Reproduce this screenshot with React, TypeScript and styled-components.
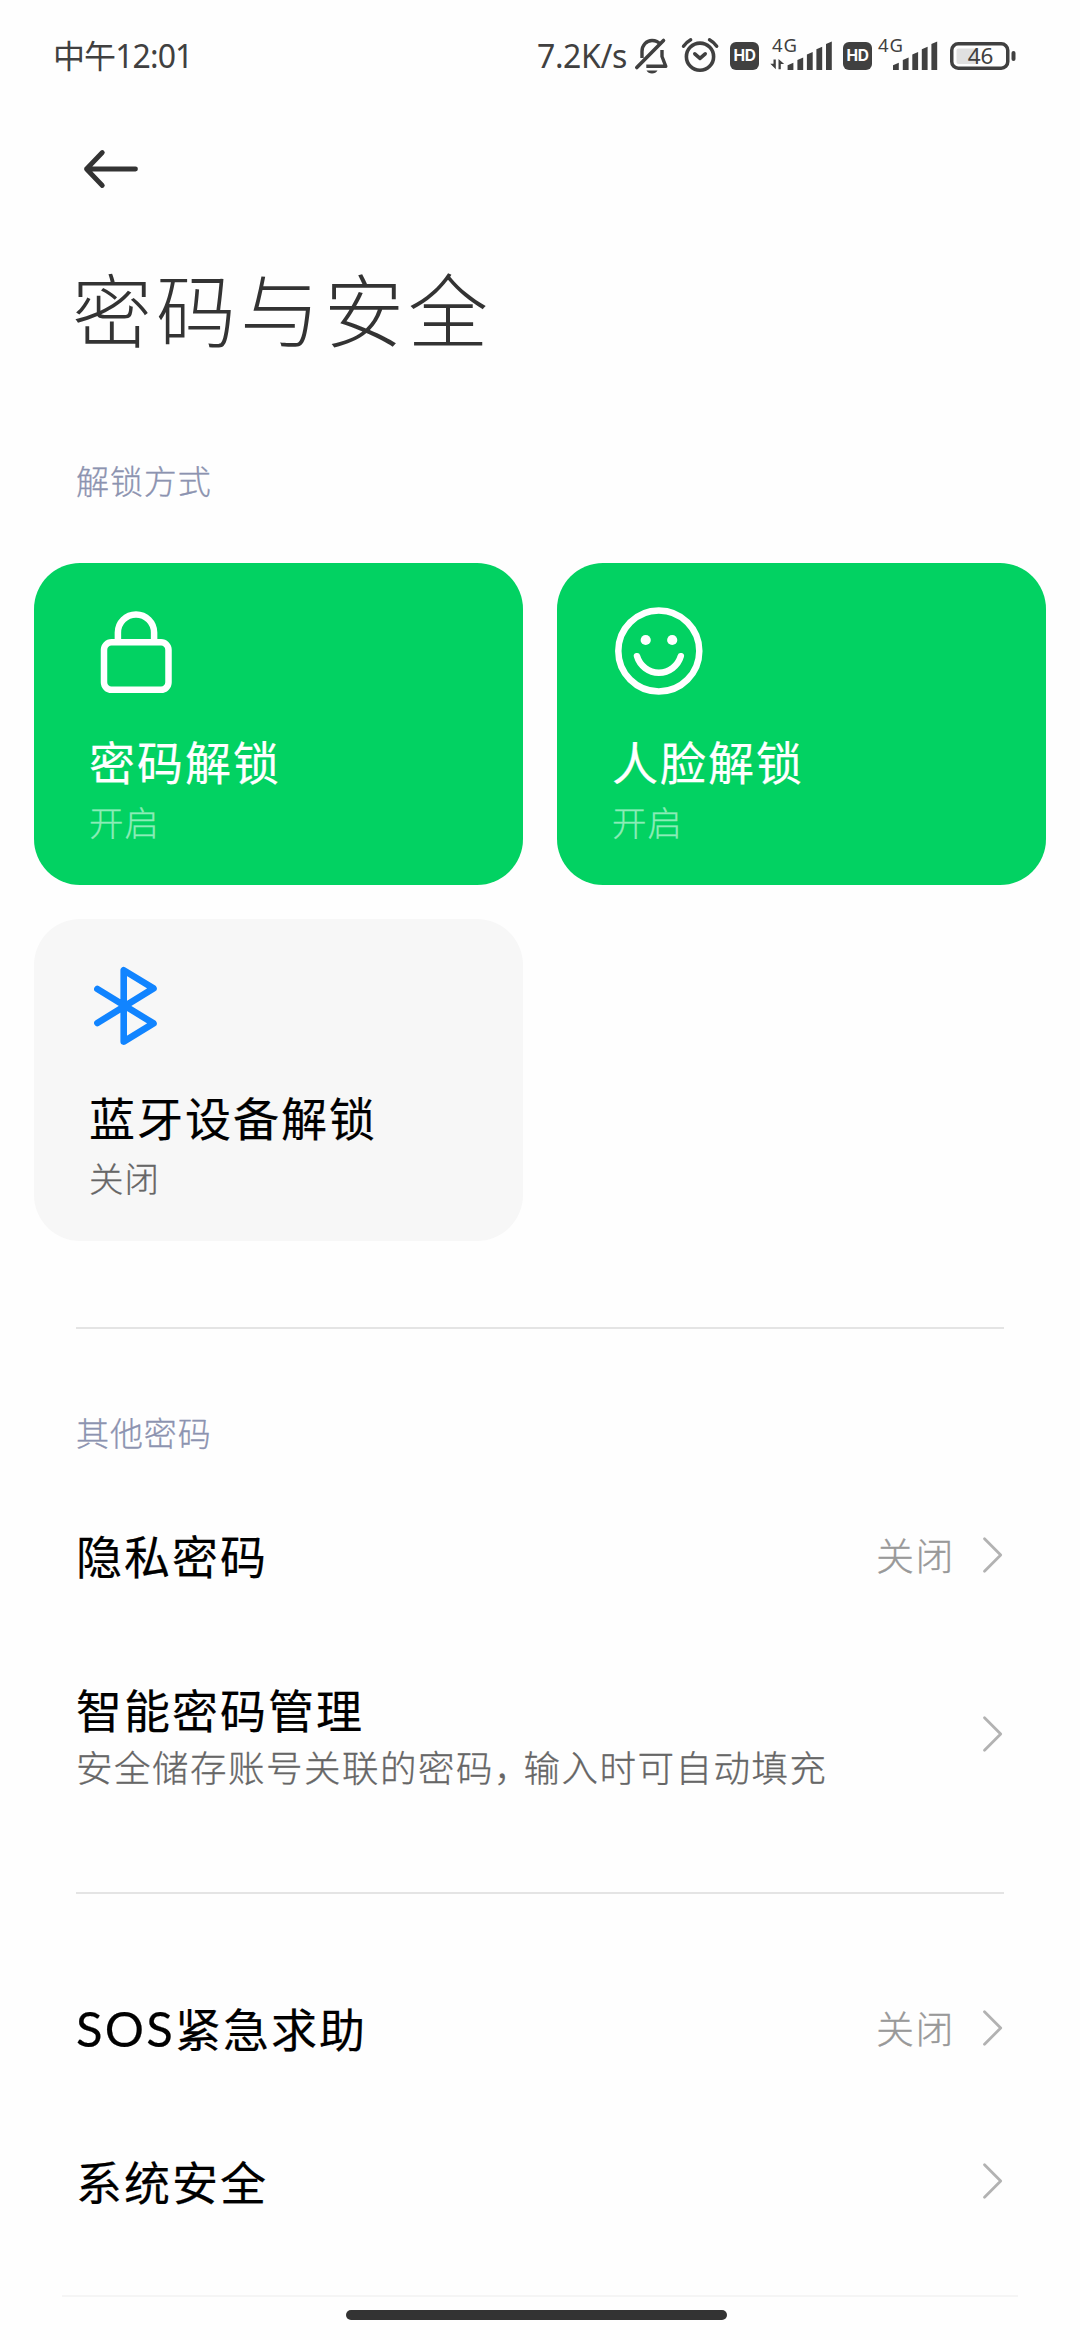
import React from "react";
import styled, { createGlobalStyle } from "styled-components";

const GlobalStyle = createGlobalStyle`
  html, body { margin: 0; padding: 0; background: #fefefe; }
  body { font-family: "Lato", "Noto Sans CJK SC", sans-serif; }
  * { box-sizing: border-box; }
  svg { display: block; flex: none; }
`;

const Screen = styled.div`
  width: 1080px;
  height: 2340px;
  overflow: hidden;
  display: flex;
  flex-direction: column;
  background: #fefefe;
`;

const StatusBar = styled.header`
  display: flex;
  align-items: center;
  height: 112px;
  padding: 0 64px 0 53px;
  color: #404040;
  font-family: "Noto Sans", "Noto Sans CJK SC", sans-serif;
  font-size: 32px;
  line-height: 40px;
`;

const Clock = styled.div`
  flex: 1;
  letter-spacing: -0.9px;
  white-space: nowrap;
`;

const Speed = styled.div`
  width: 97px;
  letter-spacing: -0.4px;
  white-space: nowrap;
`;

const StatusIcons = styled.div`
  display: flex;
  align-items: center;
`;

const HdBadge = styled.div<{ $before: number }>`
  display: flex;
  align-items: center;
  justify-content: center;
  width: 29px;
  height: 28px;
  margin-left: ${(p) => p.$before}px;
  border-radius: 6px;
  background: #404040;
  color: #fefefe;
  font-family: "Inter", sans-serif;
  font-size: 15.5px;
  font-weight: 700;
  line-height: 28px;
  letter-spacing: -0.4px;
`;

const SignalBox = styled.div<{ $before: number; $width: number }>`
  position: relative;
  width: ${(p) => p.$width}px;
  height: 36px;
  margin-left: ${(p) => p.$before}px;
`;

const NetworkLabel = styled.span<{ $left: number }>`
  position: absolute;
  left: ${(p) => p.$left}px;
  top: -3px;
  font-size: 18.5px;
  line-height: 20px;
  letter-spacing: 0.8px;
`;

const BatteryBox = styled.div`
  position: relative;
  display: flex;
  align-items: center;
  margin-left: 13px;
`;

const BatteryText = styled.span`
  position: absolute;
  left: 0;
  top: 0;
  width: 61px;
  text-align: center;
  font-size: 22.5px;
  line-height: 28px;
`;

const Toolbar = styled.nav`
  display: flex;
  align-items: center;
  height: 114px;
  padding-left: 82px;
`;

const PageTitle = styled.h1`
  margin: 34px 0 0 72px;
  font-size: 80px;
  font-weight: 200;
  line-height: 100px;
  letter-spacing: 4px;
  color: #333;
`;

const SectionLabel = styled.h2<{ $before: number }>`
  margin: ${(p) => p.$before}px 0 0 76px;
  font-size: 33px;
  font-weight: 300;
  line-height: 40px;
  letter-spacing: 0.9px;
  color: #8c93b0;
  -webkit-text-stroke: 0.3px #8c93b0;
`;

const CardGrid = styled.section`
  display: grid;
  grid-template-columns: 489px 489px;
  grid-auto-rows: 322px;
  gap: 34px;
  margin: 62px 34px 0;
`;

const Card = styled.div<{ $on: boolean }>`
  display: flex;
  flex-direction: column;
  padding: 40px 0 0 55px;
  border-radius: 46px;
  background: ${(p) => (p.$on ? "#02d262" : "#f7f7f7")};
  color: ${(p) => (p.$on ? "#fff" : "#000")};
`;

const CardTitle = styled.div`
  margin-top: 36px;
  font-size: 46px;
  line-height: 56px;
  letter-spacing: 2px;
  -webkit-text-stroke: 0.2px currentColor;
`;

const CardState = styled.div<{ $on: boolean }>`
  margin-top: 12px;
  font-size: 34.5px;
  font-weight: 300;
  line-height: 40px;
  letter-spacing: 0.9px;
  color: ${(p) => (p.$on ? "#8cecb7" : "#666")};
  -webkit-text-stroke: 0.3px currentColor;
`;

const Divider = styled.hr<{ $before: number }>`
  width: 928px;
  height: 2px;
  margin: ${(p) => p.$before}px 76px 0;
  border: 0;
  flex: none;
  background: #e4e4e4;
`;

const List = styled.section<{ $before: number }>`
  display: flex;
  flex-direction: column;
  margin-top: ${(p) => p.$before}px;
`;

const Row = styled.div<{ $height: number }>`
  display: flex;
  align-items: center;
  height: ${(p) => p.$height}px;
  padding: 0 76px;
`;

const RowText = styled.div<{ $tall: boolean }>`
  flex: 1;
  padding-top: ${(p) => (p.$tall ? 5 : 4)}px;
`;

const RowTitle = styled.div`
  font-size: 46px;
  line-height: 56px;
  letter-spacing: 2px;
  color: #000;
  -webkit-text-stroke: 0.2px #000;
`;

const Latin = styled.span`
  font-size: 49px;
  line-height: 1;
  letter-spacing: 2.2px;
`;

const RowSummary = styled.div`
  margin-top: 7px;
  font-size: 36.5px;
  font-weight: 300;
  line-height: 44px;
  letter-spacing: 1.5px;
  color: #666;
  -webkit-text-stroke: 0.3px #666;
`;

const Tight = styled.span`
  letter-spacing: -7px;
`;

const RowValue = styled.div`
  margin-right: 27px;
  font-size: 38px;
  font-weight: 300;
  line-height: 44px;
  letter-spacing: 1.5px;
  color: #999;
  -webkit-text-stroke: 0.3px #999;
`;

const BottomEdge = styled.div`
  width: 956px;
  height: 2px;
  margin: 38px 62px 0;
  flex: none;
  background: #f5f5f5;
`;

const HomeHandle = styled.div`
  width: 381px;
  height: 10px;
  margin: 13px 0 0 346px;
  flex: none;
  border-radius: 5px;
  background: #333;
`;

const AlarmSvg = styled.svg`
  margin-left: 12px;
`;

const MutedBell = () => (
  <svg width="34" height="38" viewBox="633 37 34 38" fill="none" stroke="#404040">
    <path d="M641 58v-6.500c0-6.500 4.500-11 10-11 3.600 0 6.600 1.500 8.400 4" strokeWidth="3.400" />
    <path d="M661 50v6.500l3.800 9.800h-19.500" strokeWidth="3.400" strokeLinejoin="round" />
    <path d="M635.800 67.500L662.500 40.500" strokeWidth="3.600" strokeLinecap="round" />
    <path d="M645.500 70.500h11c-1 2-3 3-5.500 3s-4.500-1-5.500-3z" fill="#404040" stroke="none" />
  </svg>
);

const Alarm = () => (
  <AlarmSvg width="40" height="38" viewBox="679 37 40 38" fill="none" stroke="#404040" strokeLinecap="round">
    <circle cx="699" cy="56.700" r="13.600" strokeWidth="3.600" />
    <path d="M682.500 46.300c2-2.800 4.300-4.900 7.200-6.500M715.700 46.300c-2-2.800-4.300-4.900-7.200-6.500" strokeWidth="3.400" />
    <path d="M693.800 53.800l5.200 4.600 5.200-4.600" strokeWidth="3.600" strokeLinejoin="round" />
  </AlarmSvg>
);

const bars = [
  [0, 62.7],
  [9.8, 57.4],
  [19.3, 52],
  [28.8, 46.7],
  [38.4, 41.5],
];

const SignalBars = ({ x, arrows }: { x: number; arrows?: boolean }) => (
  <svg width="66" height="36" viewBox="0 38 66 36" fill="#404040">
    {bars.map(([dx, top]) => (
      <path key={dx} d={`M${x + dx} ${top + 2.5}L${x + dx + 5.8} ${top}V70H${x + dx}z`} />
    ))}
    {arrows && <path d="M3.500 59.500h2.300v9.800L.3 63.800h3.200zM8.500 69.300h2.300v-5.300h3.400L8.500 59z" />}
  </svg>
);

const BackArrow = () => (
  <svg width="60" height="44" viewBox="82 147 60 44" fill="none" stroke="#333" strokeWidth="4.800" strokeLinecap="round" strokeLinejoin="round">
    <path d="M135.500 169H86.500M102.300 152.500L86.500 169l15.800 16.500" />
  </svg>
);

const LockIcon = () => (
  <svg width="96" height="96" fill="none" stroke="#fff" strokeWidth="6.500">
    <rect x="15" y="39.300" width="64.500" height="47.500" rx="7.500" />
    <path d="M28.900 39V29.500a18.100 18.100 0 0 1 36.200 0V39" />
  </svg>
);

const FaceIcon = () => (
  <svg width="96" height="96" fill="none" stroke="#fff" strokeWidth="6.500">
    <circle cx="46.800" cy="48" r="40.500" />
    <circle cx="33.700" cy="37" r="5.100" fill="#fff" stroke="none" />
    <circle cx="60.200" cy="37" r="5.100" fill="#fff" stroke="none" />
    <path d="M25 53.200a22.800 22.800 0 0 0 43.800 0" strokeLinecap="round" />
  </svg>
);

const BluetoothIcon = () => (
  <svg width="96" height="96" fill="none" stroke="#1184ff" strokeWidth="6.600" strokeLinecap="round" strokeLinejoin="round">
    <path d="M8.400 64L64.500 29.400 34.700 11.200V82.600L64.500 64.400 8.400 30" />
  </svg>
);

const Chevron = () => (
  <svg width="22" height="40" viewBox="0 0 22 40" fill="none" stroke="#b2b2b2" strokeWidth="2.800" strokeLinecap="round" strokeLinejoin="round">
    <path d="M2.500 3.700L18.700 20 2.500 36.300" />
  </svg>
);

interface MethodProps {
  icon: React.ReactNode;
  title: string;
  on: boolean;
}

const MethodCard = ({ icon, title, on }: MethodProps) => (
  <Card $on={on}>
    {icon}
    <CardTitle>{title}</CardTitle>
    <CardState $on={on}>{on ? "开启" : "关闭"}</CardState>
  </Card>
);

interface SettingProps {
  title: React.ReactNode;
  summary?: React.ReactNode;
  value?: string;
}

const SettingRow = ({ title, summary, value }: SettingProps) => (
  <Row $height={summary ? 205 : 153}>
    <RowText $tall={!!summary}>
      <RowTitle>{title}</RowTitle>
      {summary && <RowSummary>{summary}</RowSummary>}
    </RowText>
    {value && <RowValue>{value}</RowValue>}
    <Chevron />
  </Row>
);

export default function App() {
  return (
    <>
      <GlobalStyle />
      <Screen>
        <StatusBar>
          <Clock>中午12:01</Clock>
          <Speed>7.2K/s</Speed>
          <StatusIcons>
            <MutedBell />
            <Alarm />
            <HdBadge $before={10}>HD</HdBadge>
            <SignalBox $before={11} $width={62}>
              <SignalBars x={17.6} arrows />
              <NetworkLabel $left={2}>4G</NetworkLabel>
            </SignalBox>
            <HdBadge $before={11}>HD</HdBadge>
            <SignalBox $before={6} $width={59}>
              <SignalBars x={15} />
              <NetworkLabel $left={0}>4G</NetworkLabel>
            </SignalBox>
            <BatteryBox>
              <svg width="66" height="28">
                <rect x="1.750" y="1.750" width="56" height="24.500" rx="6.500" fill="none" stroke="#404040" strokeWidth="3.500" />
                <rect x="6.500" y="6.500" width="20" height="15.500" rx="2" fill="#e0e0e0" />
                <rect x="61.500" y="9" width="4" height="10" rx="2" fill="#404040" />
              </svg>
              <BatteryText>46</BatteryText>
            </BatteryBox>
          </StatusIcons>
        </StatusBar>

        <Toolbar>
          <BackArrow />
        </Toolbar>
        <PageTitle>密码与安全</PageTitle>

        <SectionLabel $before={101}>解锁方式</SectionLabel>
        <CardGrid>
          <MethodCard icon={<LockIcon />} title="密码解锁" on />
          <MethodCard icon={<FaceIcon />} title="人脸解锁" on />
          <MethodCard icon={<BluetoothIcon />} title="蓝牙设备解锁" on={false} />
        </CardGrid>

        <Divider $before={86} />
        <SectionLabel $before={84}>其他密码</SectionLabel>
        <List $before={25}>
          <SettingRow title="隐私密码" value="关闭" />
          <SettingRow
            title="智能密码管理"
            summary={<>安全储存账号关联的密码<Tight>，</Tight>输入时可自动填充</>}
          />
        </List>

        <Divider $before={56} />
        <List $before={57}>
          <SettingRow title={<><Latin>SOS</Latin>紧急求助</>} value="关闭" />
          <SettingRow title="系统安全" />
        </List>

        <BottomEdge />
        <HomeHandle />
      </Screen>
    </>
  );
}
